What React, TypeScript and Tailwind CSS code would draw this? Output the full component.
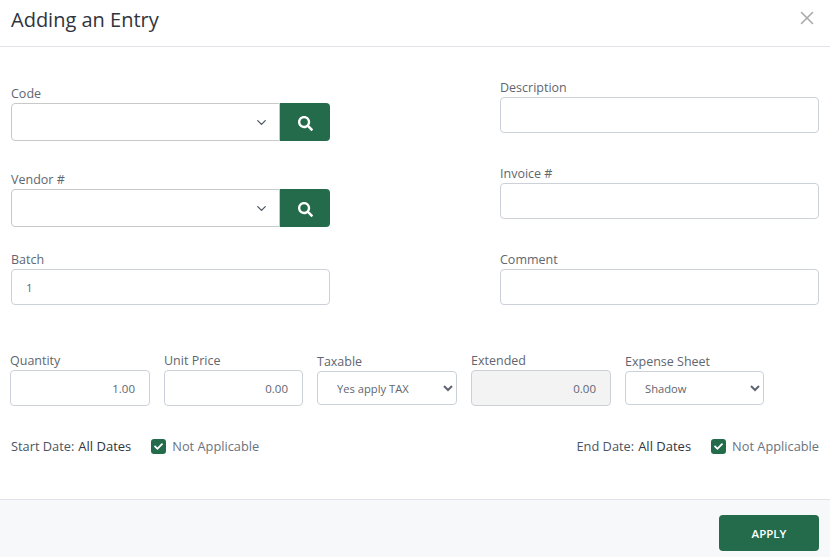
import { ChevronDown, X } from "lucide-react";
import { FaCheck, FaSearch } from "react-icons/fa";

const labelClass = "block h-[18px] text-[12.5px] leading-[20px] text-[#5f6670]";
const inputClass =
  "h-[36px] w-full rounded-[4px] border border-[#ccd1d9] px-[14px] text-[11.5px] text-[#5f6670] outline-none";

function LookupField({ label, className }: { label: string; className?: string }) {
  return (
    <div className={className}>
      <label className={labelClass}>{label}</label>
      <div className="mt-[1px] flex h-[38px]">
        <div className="flex flex-1 items-center justify-end rounded-l-[4px] border border-[#c9c9c9] bg-white pr-[10px]">
          <ChevronDown size={15} strokeWidth={2} className="text-[#4b5563]" />
        </div>
        <button className="flex w-[50px] items-center justify-center rounded-r-[4px] bg-[#246b4b] pt-[3px] text-white">
          <FaSearch size={15} />
        </button>
      </div>
    </div>
  );
}

function TextField({ label, value, className }: { label: string; value?: string; className?: string }) {
  return (
    <div className={className}>
      <label className={labelClass}>{label}</label>
      <input className={`${inputClass} mt-[1px] bg-white`} defaultValue={value} />
    </div>
  );
}

function NumberField({
  label,
  value,
  disabled,
  className,
}: {
  label: string;
  value: string;
  disabled?: boolean;
  className?: string;
}) {
  return (
    <div className={className}>
      <label className={labelClass}>{label}</label>
      <input
        className={`${inputClass} mt-[1px] text-right ${disabled ? "bg-[#f3f3f3]" : "bg-white"}`}
        defaultValue={value}
        disabled={disabled}
      />
    </div>
  );
}

function SelectField({ label, value, className }: { label: string; value: string; className?: string }) {
  return (
    <div className={`pt-[1px] ${className ?? ""}`}>
      <label className={labelClass}>{label}</label>
      <select
        className="mt-[1px] h-[34px] w-full rounded-[4px] border border-[#ccd1d9] bg-white pl-[15px] pr-[4px] text-[11.2px] text-[#5f6670] outline-none"
        defaultValue={value}
      >
        <option>{value}</option>
      </select>
    </div>
  );
}

function DateFilter({ label }: { label: string }) {
  return (
    <div className="flex items-center text-[12.8px] leading-[18px]">
      <span className="text-[#4b5563]">{label}:</span>
      <span className="ml-[4px] text-[13px] text-[#2f353c]">All Dates</span>
      <span className="ml-[20px] flex h-[15px] w-[15px] items-center justify-center rounded-[3px] bg-[#246b4b] text-white">
        <FaCheck size={9} />
      </span>
      <span className="ml-[6px] text-[#6b7280]">Not Applicable</span>
    </div>
  );
}

export default function App() {
  return (
    <div className="flex h-[557px] w-[830px] flex-col overflow-hidden bg-white font-['Open_Sans',sans-serif]">
      <header className="flex h-[47px] items-start justify-between border-b border-[#e2e3e8] pl-[11px] pr-[12px]">
        <h1 className="pt-[6px] text-[20px] leading-[28px] text-[#2f353c]">Adding an Entry</h1>
        <X size={22} strokeWidth={1.75} className="mt-[7px] text-[#ababab]" />
      </header>

      <main className="flex-1 px-[11px]">
        <div className="flex justify-between">
          <div className="w-[319px] pt-[37px]">
            <LookupField label="Code" />
            <LookupField label="Vendor #" className="mt-[29px]" />
            <TextField label="Batch" value="1" className="mt-[23px]" />
          </div>
          <div className="w-[319px] pt-[31px]">
            <TextField label="Description" />
            <TextField label="Invoice #" className="mt-[31px]" />
            <TextField label="Comment" className="mt-[31px]" />
          </div>
        </div>

        <div className="mt-[46px] -ml-[1px] flex gap-[14px]">
          <NumberField label="Quantity" value="1.00" className="w-[140px]" />
          <NumberField label="Unit Price" value="0.00" className="w-[139px]" />
          <SelectField label="Taxable" value="Yes apply TAX" className="w-[140px]" />
          <NumberField label="Extended" value="0.00" disabled className="w-[140px]" />
          <SelectField label="Expense Sheet" value="Shadow" className="w-[139px]" />
        </div>

        <div className="mt-[31px] flex justify-between">
          <DateFilter label="Start Date" />
          <DateFilter label="End Date" />
        </div>
      </main>

      <footer className="flex h-[58px] justify-end border-t border-[#e2e3e8] bg-[#f7f8fa] pr-[11px] pt-[15px]">
        <button className="h-[36px] w-[100px] rounded-[4px] bg-[#246b4b] pt-[1px] text-[11.5px] font-semibold text-white">
          APPLY
        </button>
      </footer>
    </div>
  );
}
